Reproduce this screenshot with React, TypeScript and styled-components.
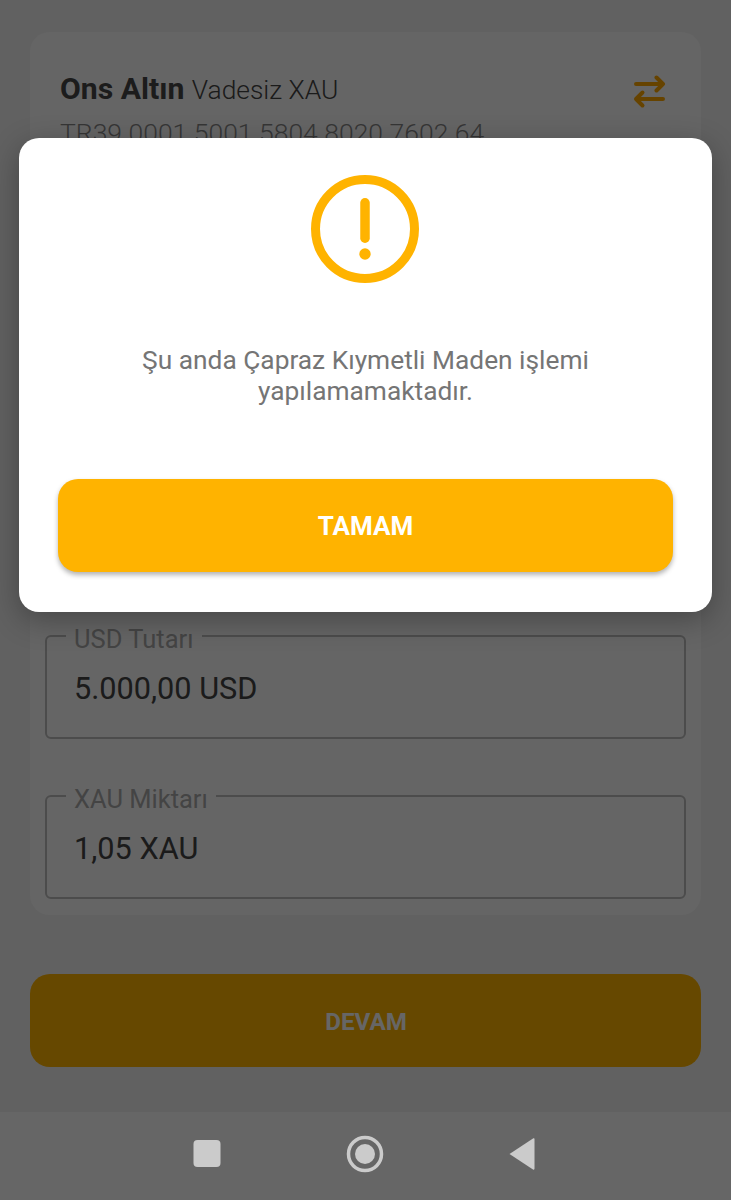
import React from "react"
import styled, { createGlobalStyle } from "styled-components"

const GlobalStyle = createGlobalStyle`
    html,
    body {
        margin: 0;
        padding: 0;
        background: #666;
    }

    * {
        box-sizing: border-box;
    }
`

const Page = styled.div`
    width: 731px;
    height: 1200px;
    display: flex;
    flex-direction: column;
    overflow: hidden;
    font-family: Roboto, "Liberation Sans", sans-serif;
`

const Screen = styled.div`
    position: relative;
    height: 1112px;
    padding: 32px 30px 0;
    background: #f3f3f3;
`

const Card = styled.section`
    height: 883px;
    padding: 41px 15px 0;
    background: #fdfdfd;
    border-radius: 20px;
`

const CardHeader = styled.div`
    display: flex;
    justify-content: space-between;
    padding: 0 15px;
`

const AccountName = styled.div`
    font-size: 26.4px;
    line-height: 31px;
    font-weight: 300;
    color: #444;

    strong {
        margin-right: 1px;
        font-size: 30.2px;
        font-weight: 700;
        color: #484848;
    }
`

const Iban = styled.div`
    margin-top: 11px;
    font-size: 26.5px;
    line-height: 31px;
    font-weight: 300;
    color: #888;
`

const SwapIcon = styled.svg`
    width: 34px;
    height: 34px;
    margin: 2px 5px 0 0;
    flex-shrink: 0;
    fill: none;
    stroke: #ffa800;
    stroke-width: 4;
    stroke-linecap: round;
    stroke-linejoin: round;
`

const Fields = styled.div`
    display: flex;
    flex-direction: column;
    gap: 42px;
    margin-top: 473px;
`

const Field = styled.fieldset`
    height: 118px;
    margin: 0;
    padding: 0 19px;
    border: 2px solid #bdbdbd;
    border-radius: 6px;
`

const FieldLabel = styled.legend`
    padding: 6px 8px 0;
    font-size: 25.5px;
    line-height: 24px;
    color: #aaa;
`

const FieldValue = styled.div`
    margin-top: 21px;
    padding-left: 8px;
    font-size: 30.7px;
    line-height: 34px;
    color: #444;
`

const ContinueButton = styled.button`
    display: block;
    width: 100%;
    height: 93px;
    margin-top: 59px;
    padding: 2px 0 0 1px;
    border: 0;
    border-radius: 20px;
    background: #ffb300;
    font: 700 24.2px Roboto, sans-serif;
    color: #fff;
`

const Scrim = styled.div`
    position: absolute;
    inset: 0;
    padding: 138px 19px 0;
    background: rgba(0, 0, 0, 0.6);
`

const Dialog = styled.div`
    height: 474px;
    padding: 37px 39px 0;
    display: flex;
    flex-direction: column;
    align-items: center;
    background: #fff;
    border-radius: 20px;
    box-shadow: 0 8px 30px rgba(0, 0, 0, 0.3);
`

const AlertIcon = styled.svg`
    width: 108px;
    height: 108px;
    margin-right: 1px;
    flex-shrink: 0;
`

const Message = styled.p`
    margin: 62px 0 0;
    font-size: 26.3px;
    line-height: 31px;
    text-align: center;
    color: #757575;
`

const OkButton = styled.button`
    width: 100%;
    height: 93px;
    margin-top: 72px;
    flex-shrink: 0;
    border: 0;
    border-radius: 20px;
    background: #ffb300;
    box-shadow: 0 3px 5px rgba(0, 0, 0, 0.3);
    font: 700 26px Roboto, sans-serif;
    color: #fff;
`

const NavBar = styled.nav`
    flex-grow: 1;
    display: flex;
    align-items: center;
    justify-content: center;
    gap: 108px;
    padding: 0 1px 4px 0;
    background: #666;
`

const NavIcon = styled.svg`
    width: 50px;
    height: 50px;
    fill: #cbcbcb;
`

const App = () => {
    return (
        <Page>
            <GlobalStyle />
            <Screen>
                <Card>
                    <CardHeader>
                        <div>
                            <AccountName>
                                <strong>Ons Altın</strong> Vadesiz XAU
                            </AccountName>
                            <Iban>TR39 0001 5001 5804 8020 7602 64</Iban>
                        </div>
                        <SwapIcon viewBox="0 0 34 34">
                            <path d="M4 9H31M24.5 2.5L31 9L24.5 15.5" />
                            <path d="M31 24H4M10.5 17.5L4 24L10.5 30.5" />
                        </SwapIcon>
                    </CardHeader>
                    <Fields>
                        <Field>
                            <FieldLabel>USD Tutarı</FieldLabel>
                            <FieldValue>5.000,00 USD</FieldValue>
                        </Field>
                        <Field>
                            <FieldLabel>XAU Miktarı</FieldLabel>
                            <FieldValue>1,05 XAU</FieldValue>
                        </Field>
                    </Fields>
                </Card>
                <ContinueButton>DEVAM</ContinueButton>
                <Scrim>
                    <Dialog>
                        <AlertIcon viewBox="0 0 108 108">
                            <circle cx="54" cy="54" r="49.5" fill="none" stroke="#ffb300" strokeWidth="9" />
                            <rect x="49.25" y="23" width="9.5" height="45" rx="4.75" fill="#ffb300" />
                            <circle cx="54" cy="79" r="5.7" fill="#ffb300" />
                        </AlertIcon>
                        <Message>
                            Şu anda Çapraz Kıymetli Maden işlemi
                            <br />
                            yapılamamaktadır.
                        </Message>
                        <OkButton>TAMAM</OkButton>
                    </Dialog>
                </Scrim>
            </Screen>
            <NavBar>
                <NavIcon viewBox="0 0 50 50">
                    <rect x="11.5" y="11" width="27" height="27" rx="4" />
                </NavIcon>
                <NavIcon viewBox="0 0 50 50">
                    <circle cx="25" cy="25" r="16.5" fill="none" stroke="#cbcbcb" strokeWidth="3.5" />
                    <circle cx="25" cy="25" r="10" />
                </NavIcon>
                <NavIcon viewBox="0 0 50 50">
                    <path d="M11.5 25L35 9.5C36 9 36.5 9.5 36.5 10.5V39.5C36.5 40.5 36 41 35 40.5Z" />
                </NavIcon>
            </NavBar>
        </Page>
    )
}

export default App
